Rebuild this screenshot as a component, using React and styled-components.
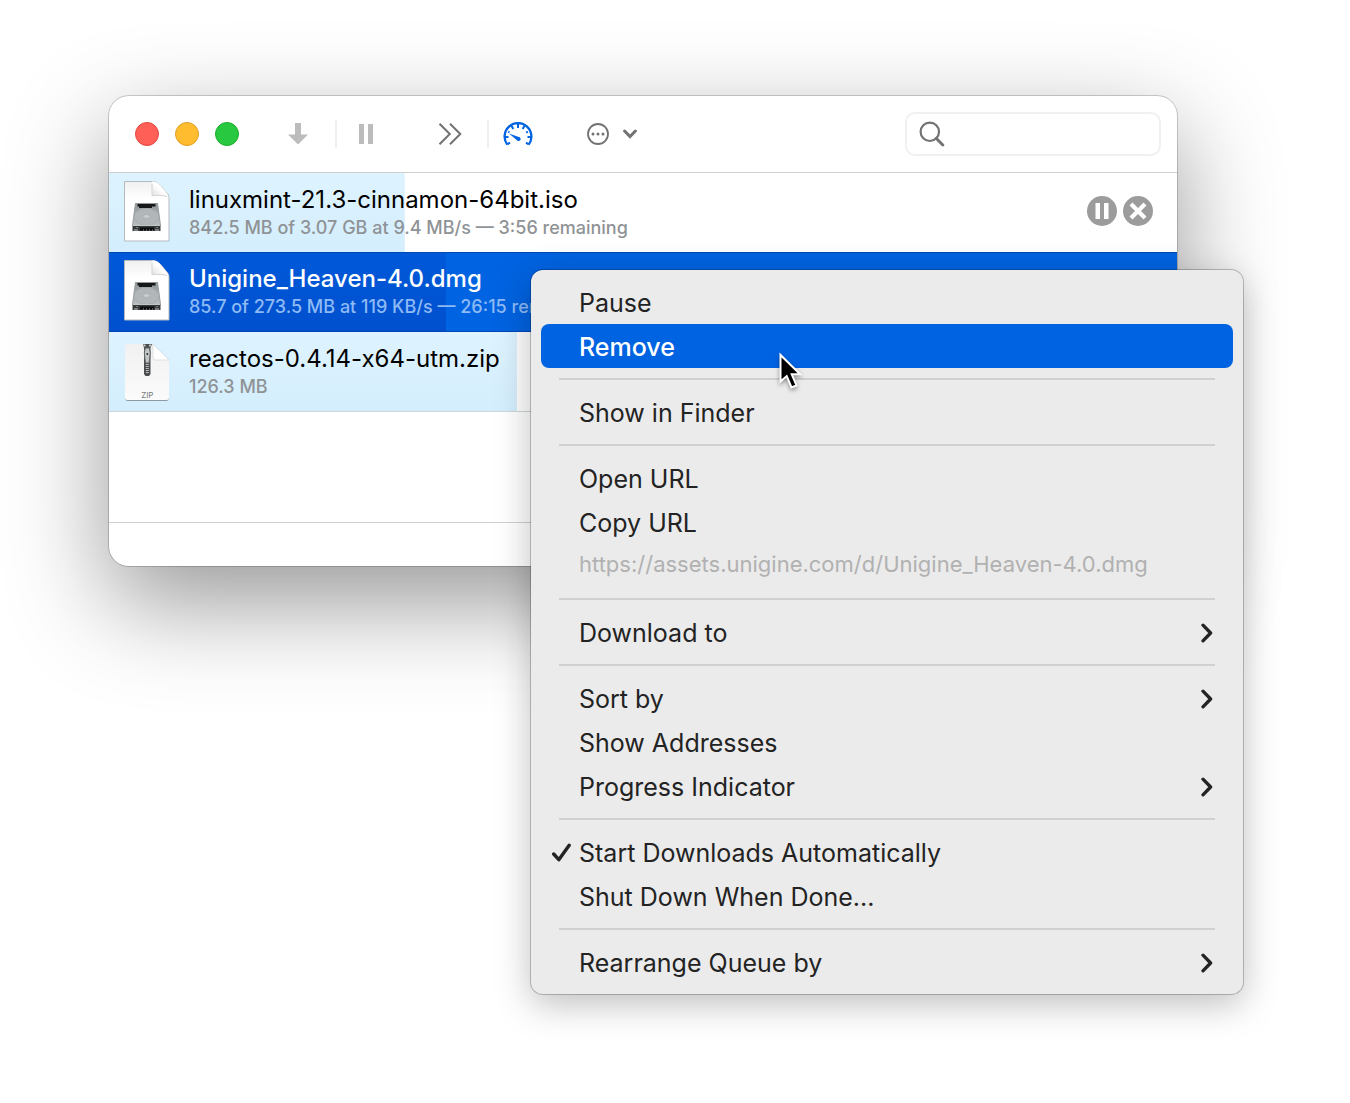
import React from "react";
import styled, { createGlobalStyle, css } from "styled-components";

const font = `Inter, "Liberation Sans", sans-serif`;

const colors = {
  accent: "#0063e1",
  text: "#000000",
  menuText: "#232323",
  muted: "#8f9396",
  icon: "#727272",
  iconDisabled: "#bcbcbc",
};

const downloads = [
  {
    name: "linuxmint-21.3-cinnamon-64bit.iso",
    status: "842.5 MB of 3.07 GB at 9.4 MB/s — 3:56 remaining",
    progress: 27.7,
    kind: "disk",
    controls: true,
  },
  {
    name: "Unigine_Heaven-4.0.dmg",
    status: "85.7 of 273.5 MB at 119 KB/s — 26:15 remaining",
    progress: 31.6,
    kind: "disk",
    selected: true,
  },
  {
    name: "reactos-0.4.14-x64-utm.zip",
    status: "126.3 MB",
    progress: 38.2,
    kind: "zip",
  },
];

const menuGroups = [
  [{ label: "Pause" }, { label: "Remove", active: true }],
  [{ label: "Show in Finder" }],
  [
    { label: "Open URL" },
    { label: "Copy URL" },
    { label: "https://assets.unigine.com/d/Unigine_Heaven-4.0.dmg", note: true },
  ],
  [{ label: "Download to", submenu: true }],
  [
    { label: "Sort by", submenu: true },
    { label: "Show Addresses" },
    { label: "Progress Indicator", submenu: true },
  ],
  [
    { label: "Start Downloads Automatically", checked: true },
    { label: "Shut Down When Done..." },
  ],
  [{ label: "Rearrange Queue by", submenu: true }],
];

/* Icons */

const ArrowDownIcon = () => (
  <svg width="20" height="22" viewBox="0 0 20 22" fill={colors.iconDisabled}>
    <path d="M7 0h6v11.500h7L10 21.500 0 11.500h7z" />
  </svg>
);

const PauseIcon = () => (
  <svg width="14" height="20" viewBox="0 0 14 20" fill={colors.iconDisabled}>
    <path d="M0 0h5v20H0zM9 0h5v20H9z" />
  </svg>
);

const ForwardIcon = () => (
  <svg width="24" height="22" viewBox="0 0 24 22" fill="none" stroke={colors.icon} strokeWidth="2">
    <path d="M1.500.8 11.800 11 1.500 21.200M12 .8 22.300 11 12 21.200" />
  </svg>
);

const GaugeIcon = () => (
  <svg width="30" height="24" viewBox="0 0 30 24" fill="none" stroke={colors.accent}>
    <path d="M4.300 22.600A13.400 13.400 0 1 1 25.700 22.600" strokeWidth="2.300" />
    <path
      d="M2 15h3.500M28 15h-3.500M15 2v4M8.500 3.700l1.800 3.300M21.500 3.700 19.700 7M24.800 9.700l-1.600 1M5.200 9.700l1.200.8M4.300 22.300l2.700-1.700M25.700 22.300 23 20.600"
      strokeWidth="2"
    />
    <path d="M6 11.400 15.800 15.100A2 2 0 1 1 14 18.200z" fill={colors.accent} stroke="none" />
  </svg>
);

const MoreIcon = () => (
  <svg width="22" height="22" viewBox="0 0 22 22" fill={colors.icon}>
    <circle cx="11" cy="11" r="10" fill="none" stroke={colors.icon} strokeWidth="1.800" />
    <circle cx="6" cy="11" r="1.500" />
    <circle cx="11" cy="11" r="1.500" />
    <circle cx="16" cy="11" r="1.500" />
  </svg>
);

const ChevronDownIcon = () => (
  <svg width="14" height="10" viewBox="0 0 14 10" fill="none" stroke={colors.icon} strokeWidth="3">
    <path d="M1.600 2 7 7.600 12.400 2" strokeLinecap="round" />
  </svg>
);

const SearchIcon = () => (
  <svg width="26" height="26" viewBox="0 0 26 26" fill="none" stroke={colors.icon}>
    <circle cx="10.800" cy="10.800" r="9.200" strokeWidth="2.200" />
    <path d="m17.400 17.400 6.400 6.600" strokeWidth="2.900" strokeLinecap="round" />
  </svg>
);

const CirclePauseIcon = () => (
  <svg width="30" height="30" viewBox="0 0 30 30">
    <circle cx="15" cy="15" r="15" fill="#9c9c9c" />
    <path d="M8.500 7h4.500v16H8.500zM17 7h4.500v16H17z" fill="#fff" />
  </svg>
);

const CircleCloseIcon = () => (
  <svg width="30" height="30" viewBox="0 0 30 30">
    <circle cx="15" cy="15" r="15" fill="#9c9c9c" />
    <path d="m8 8 14 14M22 8 8 22" stroke="#fff" strokeWidth="4.200" />
  </svg>
);

const CheckIcon = () => (
  <svg width="20" height="20" viewBox="0 0 20 20" fill="none" stroke={colors.menuText} strokeWidth="3.400">
    <path d="M2.700 11 7.800 16.700 18.200 2.300" strokeLinecap="round" strokeLinejoin="round" />
  </svg>
);

const ChevronRightIcon = () => (
  <svg width="12" height="20" viewBox="0 0 12 20" fill="none" stroke={colors.menuText} strokeWidth="3.300">
    <path d="M2 2.200 9.600 10 2 17.800" strokeLinecap="round" strokeLinejoin="round" />
  </svg>
);

const DiskFileIcon = () => (
  <svg width="48" height="62" viewBox="0 0 48 62">
    <defs>
      <linearGradient id="paper" x1="0" y1="0" x2="0" y2="1">
        <stop offset="0" stopColor="#f0f0f0" />
        <stop offset=".3" stopColor="#fff" />
      </linearGradient>
      <linearGradient id="fold" x1="0" y1="1" x2="1" y2="0">
        <stop offset="0" stopColor="#dcdcdc" />
        <stop offset=".5" stopColor="#fff" />
      </linearGradient>
      <linearGradient id="metal" x1="0" y1="0" x2="0" y2="1">
        <stop offset="0" stopColor="#8f9799" />
        <stop offset="1" stopColor="#b9bfc0" />
      </linearGradient>
    </defs>
    <path d="M1.500 1.500h28c4 0 6 2 8 4l5 6c2.500 2.500 3.500 4 3.500 7v42.500h-44.500z" fill="url(#paper)" stroke="#b3bbbf" />
    <path d="M29 1.500c1 4 .5 8 0 14.500 6-.5 12-1 16.600 1.200-.5-2-1.600-3.700-3.100-5.700l-5-6c-2.200-2.600-4.500-4-8.500-4z" fill="url(#fold)" />
    <path d="M29 4v11.500c6 0 11-.5 15 1" fill="none" stroke="#d4d4d4" />
    <path d="M12.500 23h22l3 22.500H9.500z" fill="url(#metal)" />
    <path d="M12.500 23 9.500 45M34.500 23l3 22" stroke="#8b9395" strokeWidth=".8" />
    <path d="M14.500 24h18v2.500h-3.500V28H16v-1.500h-1.500z" fill="#151718" />
    <ellipse cx="23.500" cy="37" rx="12.500" ry="8.500" fill="#b1b7b9" stroke="#a0a8aa" strokeWidth=".7" />
    <ellipse cx="23.500" cy="36.500" rx="3.500" ry="2" fill="#c8cdce" stroke="#a3aaac" strokeWidth=".7" />
    <path d="M9.500 45h28v6h-28z" fill="#36393a" />
    <path d="M10 45.500h27M11 50h4M32 50h4" stroke="#c1c5c6" />
    <path d="M17 47.500h14v3H17z" fill="#090a0a" />
    <path d="M20 50h1M23 50h1M26 50h1M29 50h1" stroke="#989d9f" />
    <path d="M13 47.500h2M33 47.500h2" stroke="#797e80" />
  </svg>
);

const ZipFileIcon = () => (
  <svg width="48" height="62" viewBox="0 0 48 62">
    <defs>
      <linearGradient id="zip-paper" x1="0" y1="0" x2="0" y2="1">
        <stop offset="0" stopColor="#f1f1f1" />
        <stop offset="1" stopColor="#fbfbfb" />
      </linearGradient>
      <filter id="zip-shadow" x="-10%" y="-10%" width="120%" height="120%">
        <feDropShadow dx="0" dy="1" stdDeviation=".6" floodOpacity=".35" />
      </filter>
    </defs>
    <g filter="url(#zip-shadow)">
      <path d="M5 5h25l16 16v37a3 3 0 0 1-3 3H5a3 3 0 0 1-3-3V8a3 3 0 0 1 3-3z" fill="url(#zip-paper)" />
    </g>
    <path d="M30 5v14a2 2 0 0 0 2 2h14z" fill="#fff" stroke="#d5dadc" strokeWidth=".8" />
    <path d="M20 5h9l-1.500 4v26l-1.500 2h-3.500L21 35V9z" fill="#4a4c4d" />
    <path d="M20.500 6.500h2M26 6.500h2" stroke="#c9cccd" strokeWidth="2" />
    <path d="M24.300 17v18" stroke="#b9bdbf" strokeWidth="3" strokeDasharray="1 1" />
    <path d="M22.300 9h4l1 5-1.200 10h-3.600L21.300 14z" fill="#c1c6c8" stroke="#616566" />
    <circle cx="24.300" cy="15" r="1" fill="#303233" />
    <text x="24.300" y="59" textAnchor="middle" fontSize="8" fontFamily={font} fill="#777">
      ZIP
    </text>
  </svg>
);

const PointerIcon = () => (
  <svg width="28" height="42" viewBox="0 0 28 42">
    <path
      d="M2.500 4v26.500l6.200-5.400 4.800 11.400 5-2.100-4.800-11.100h8.400z"
      fill="#000"
      stroke="#fff"
      strokeWidth="2"
    />
  </svg>
);

/* DownloadRow
 *
 * One entry of the queue, the tinted part of the background shows how much of the file is done.
 */

const DownloadRow = ({ name, status, progress, kind, selected, controls }) => (
  <StyledRow $selected={selected} style={{ backgroundSize: `${progress}% 100%` }}>
    {kind === "zip" ? <ZipFileIcon /> : <DiskFileIcon />}
    <StyledDetails>
      <StyledName>{name}</StyledName>
      <StyledStatus $selected={selected}>{status}</StyledStatus>
    </StyledDetails>
    {controls && (
      <StyledControls>
        <StyledIconButton aria-label="Pause download">
          <CirclePauseIcon />
        </StyledIconButton>
        <StyledIconButton aria-label="Cancel download">
          <CircleCloseIcon />
        </StyledIconButton>
      </StyledControls>
    )}
  </StyledRow>
);

/* ContextMenu
 *
 * Groups of commands with a line between them.
 */

const ContextMenu = ({ groups }) => (
  <StyledMenu role="menu">
    {groups.map((items, index) => (
      <React.Fragment key={items[0].label}>
        {index > 0 && <StyledSeparator />}
        {items.map(({ label, active, note, submenu, checked }) => (
          <StyledMenuItem
            key={label}
            role={checked ? "menuitemcheckbox" : "menuitem"}
            aria-checked={checked}
            disabled={note}
            $active={active}
            $note={note}
          >
            <StyledMark>{checked && <CheckIcon />}</StyledMark>
            <StyledLabel>{label}</StyledLabel>
            {submenu && <ChevronRightIcon />}
          </StyledMenuItem>
        ))}
      </React.Fragment>
    ))}
    <StyledPointer>
      <PointerIcon />
    </StyledPointer>
  </StyledMenu>
);

const App = () => (
  <>
    <GlobalStyle />
    <StyledPage>
      <StyledWindow>
        <StyledToolbar>
          <StyledLights>
            <StyledLight $color="#ff5f57" $edge="#e2483f" aria-label="Close" />
            <StyledLight $color="#febc2e" $edge="#e0a028" aria-label="Minimize" />
            <StyledLight $color="#28c840" $edge="#1dad2b" aria-label="Zoom" />
          </StyledLights>
          <StyledToolGroup>
            <StyledTool $lead aria-label="Start">
              <ArrowDownIcon />
            </StyledTool>
            <StyledDivider />
            <StyledTool aria-label="Pause">
              <PauseIcon />
            </StyledTool>
          </StyledToolGroup>
          <StyledToolGroup>
            <StyledTool $lead aria-label="Full speed">
              <ForwardIcon />
            </StyledTool>
            <StyledDivider />
            <StyledTool aria-label="Limit speed">
              <GaugeIcon />
            </StyledTool>
          </StyledToolGroup>
          <StyledMore aria-label="More actions">
            <MoreIcon />
            <ChevronDownIcon />
          </StyledMore>
          <StyledSearch>
            <SearchIcon />
            <StyledSearchInput type="search" aria-label="Search downloads" />
          </StyledSearch>
        </StyledToolbar>
        <StyledList>
          {downloads.map((download) => (
            <DownloadRow key={download.name} {...download} />
          ))}
        </StyledList>
        <StyledFooter />
        <ContextMenu groups={menuGroups} />
      </StyledWindow>
    </StyledPage>
  </>
);

const GlobalStyle = createGlobalStyle`
  *,
  *::before,
  *::after {
    box-sizing: border-box;
  }

  body {
    margin: 0;
    background: #ffffff;
    font-family: ${font};
  }

  button,
  input {
    margin: 0;
    padding: 0;
    border: 0;
    background: none;
    color: inherit;
    font: inherit;
  }

  svg {
    display: block;
    flex: none;
  }
`;

const StyledPage = styled.main`
  min-height: 100vh;
  padding: 96px 173px 96px 109px;
`;

const StyledWindow = styled.section`
  position: relative;
  display: flex;
  flex-direction: column;
  border-radius: 20px;
  background: #ffffff;
  box-shadow:
    0 0 0 1px rgba(0, 0, 0, 0.18),
    0 36px 100px rgba(0, 0, 0, 0.41);
`;

const StyledToolbar = styled.header`
  display: flex;
  align-items: center;
  height: 77px;
  padding: 0 16px 0 26px;
  border-bottom: 1px solid #d0d0d0;
`;

const StyledLights = styled.div`
  display: flex;
  gap: 16px;
  margin-right: 4px;
`;

const StyledLight = styled.button`
  width: 24px;
  height: 24px;
  border: 1px solid ${({ $edge }) => $edge};
  border-radius: 50%;
  background: ${({ $color }) => $color};
`;

const StyledToolGroup = styled.div`
  display: flex;
  align-items: center;
  margin-left: 18px;
`;

const StyledTool = styled.button`
  display: flex;
  align-items: center;
  justify-content: center;
  width: ${({ $lead }) => ($lead ? "74px" : "58px")};
  height: 44px;
`;

const StyledDivider = styled.span`
  width: 2px;
  height: 28px;
  background: #efefef;
`;

const StyledMore = styled.button`
  display: flex;
  align-items: center;
  gap: 14px;
  height: 44px;
  margin-left: 18px;
  padding: 0 22px;
`;

const StyledSearch = styled.label`
  display: flex;
  align-items: center;
  gap: 8px;
  width: 256px;
  height: 44px;
  margin-left: auto;
  padding: 0 12px;
  border: 2px solid #f0f0f0;
  border-radius: 10px;
`;

const StyledSearchInput = styled.input`
  flex: 1;
  min-width: 0;
  font-size: 24px;
  outline: none;
`;

const StyledList = styled.ul`
  min-height: 349px;
  margin: 0;
  padding: 0;
  list-style: none;
`;

const StyledRow = styled.li`
  display: flex;
  align-items: center;
  gap: 18px;
  height: 80px;
  padding: 0 24px 4px 14px;
  border-bottom: 1px solid #ced6da;
  background: #ffffff linear-gradient(#def3ff, #d4eefd) no-repeat;
  color: ${colors.text};

  ${({ $selected }) =>
    $selected &&
    css`
      margin-top: -1px;
      border-top: 1px solid #0047b4;
      border-bottom-color: #0047b4;
      background: ${colors.accent} linear-gradient(#0059d9, #0050ce) no-repeat;
      color: #ffffff;
      font-weight: 500;
    `}
`;

const StyledDetails = styled.div`
  flex: 1;
  min-width: 0;
  padding-top: 4px;
  white-space: nowrap;
`;

const StyledName = styled.div`
  font-size: 24px;
  line-height: 30px;
`;

const StyledStatus = styled.div`
  font-size: 18px;
  font-weight: 500;
  line-height: 26px;
  color: ${({ $selected }) => ($selected ? "#8dbaf5" : colors.muted)};
`;

const StyledControls = styled.div`
  display: flex;
  gap: 6px;
`;

const StyledIconButton = styled.button`
  border-radius: 50%;
`;

const StyledFooter = styled.footer`
  height: 44px;
  border-top: 1px solid #d0d0d0;
`;

const StyledMenu = styled.div`
  position: absolute;
  top: 174px;
  right: -66px;
  left: 422px;
  display: flex;
  flex-direction: column;
  padding: 10px;
  border-radius: 12px;
  background: #ebebeb;
  box-shadow:
    0 0 0 1px rgba(0, 0, 0, 0.22),
    0 10px 36px rgba(0, 0, 0, 0.26);
`;

const StyledMenuItem = styled.button`
  display: flex;
  align-items: center;
  height: 44px;
  padding: 2px 20px 0 10px;
  border-radius: 8px;
  background: ${({ $active }) => ($active ? colors.accent : "transparent")};
  color: ${({ $active }) => ($active ? "#ffffff" : colors.menuText)};
  font-size: 25px;
  font-weight: ${({ $active }) => ($active ? 500 : 400)};
  line-height: 30px;
  text-align: left;
  white-space: nowrap;

  ${({ $note }) =>
    $note &&
    css`
      padding-top: 0;
      padding-bottom: 4px;
      color: #b1b1b1;
      font-size: 22px;
    `}
`;

const StyledMark = styled.span`
  flex: none;
  width: 28px;
`;

const StyledLabel = styled.span`
  flex: 1;
`;

const StyledSeparator = styled.hr`
  width: auto;
  height: 2px;
  margin: 10px 18px;
  border: 0;
  background: #d0d0d0;
`;

const StyledPointer = styled.span`
  position: absolute;
  top: 81px;
  left: 247px;
  filter: drop-shadow(0 2px 2px rgba(0, 0, 0, 0.4));
  pointer-events: none;
`;

export default App;
